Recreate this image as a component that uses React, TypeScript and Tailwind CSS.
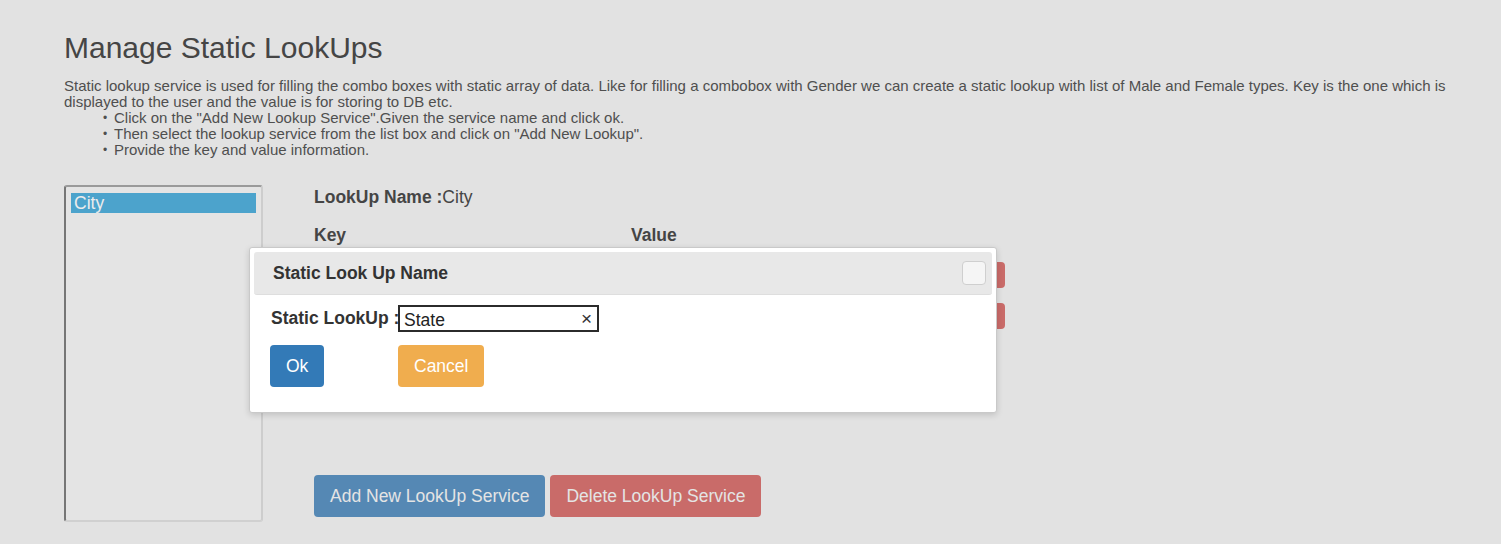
import React from 'react'

const rows = [
  { key: 'Hyderabad', value: 'HYD' },
  { key: 'Chennai', value: 'CHN' },
]

const steps = [
  'Click on the "Add New Lookup Service".Given the service name and click ok.',
  'Then select the lookup service from the list box and click on "Add New Lookup".',
  'Provide the key and value information.',
]

function StaticLookupModal() {
  const [name, setName] = React.useState('State')

  return (
    <div className="absolute left-[249px] top-[247px] w-[748px] bg-white border border-[#c9c9c9] rounded-[3px] p-[4px] pb-[25px] shadow-[0_2px_6px_rgba(0,0,0,0.15)]">
      <div className="h-[43px] bg-[#e8e8e8] rounded-[3px] border-b border-[#dedede] flex items-center justify-between pl-[19px] pr-[6px]">
        <span className="text-[17.5px] font-bold text-[#333]">Static Look Up Name</span>
        <button className="w-[24px] h-[24px] bg-[#f5f5f5] border border-[#cfcfcf] rounded-[4px]" />
      </div>

      <div className="pl-[16px] pt-[10px]">
        <div className="grid grid-cols-[128px_auto] items-center">
          <label className="text-[17.5px] font-bold text-[#333] pl-[1px] whitespace-nowrap">Static LookUp :</label>
          <div className="relative w-[201px] h-[27px] border-2 border-[#2b2b2b] flex items-center">
            <input
              value={name}
              onChange={(e) => setName(e.target.value)}
              className="w-full h-full pl-[4px] pr-[20px] pt-[3px] text-[17.5px] text-[#222] outline-none bg-white"
            />
            <span className="absolute right-[5px] top-[2px] text-[19px] leading-[20px] text-[#333]">×</span>
          </div>
        </div>

        <div className="grid grid-cols-[128px_auto] mt-[13px]">
          <div>
            <button className="h-[42px] px-[16px] bg-[#337ab7] text-white text-[17.5px] rounded-[4px]">Ok</button>
          </div>
          <div>
            <button className="h-[42px] px-[16px] bg-[#f0ad4e] text-white text-[17.5px] rounded-[4px]">Cancel</button>
          </div>
        </div>
      </div>
    </div>
  )
}

export default function App() {
  return (
    <div
      className="relative min-h-[544px] bg-[#e2e2e2] pl-[64px] pt-[31px] text-[#4a4a4a]"
      style={{ fontFamily: '"Liberation Sans", Arial, sans-serif' }}
    >
      <h2 className="text-[30px] leading-[33px] text-[#454545]">Manage Static LookUps</h2>

      <div className="mt-[14px] w-[1400px] text-[15px] leading-[16px] text-[#4f4f4f]">
        <p>
          Static lookup service is used for filling the combo boxes with static array of data. Like for filling a
          combobox with Gender we can create a static lookup with list of Male and Female types. Key is the one which is
          displayed to the user and the value is for storing to DB etc.
        </p>
        <ul className="pl-[50px]">
          {steps.map((s) => (
            <li key={s} className="flex">
              <span className="w-[11px] -ml-[11px] text-[12px] leading-[16px]">•</span>
              <span>{s}</span>
            </li>
          ))}
        </ul>
      </div>

      <div className="mt-[27px] flex">
        <div className="w-[199px] h-[337px] rounded-[3px] border-2 border-t-[#9a9a9a] border-l-[#767676] border-r-[#cdcdcd] border-b-[#d0d0d0] bg-[#e4e4e4] pt-[6px] px-[5px]">
          <div className="h-[20px] bg-[#4ca3cc] text-[#ececec] text-[17.5px] leading-[20px] pl-[3px]">City</div>
        </div>

        <div className="ml-[51px] flex flex-col">
          <div className="mt-[2px] text-[17.5px] leading-[20px] text-[#454545]">
            <span className="font-bold">LookUp Name :</span>City
          </div>

          <div className="mt-[18px] grid grid-cols-[317px_auto] text-[17.5px] leading-[20px] font-bold text-[#454545]">
            <span>Key</span>
            <span>Value</span>
          </div>

          <div className="mt-[17px] flex flex-col gap-[15px]">
            {rows.map((r) => (
              <div key={r.key} className="flex items-center">
                <input
                  defaultValue={r.key}
                  className="w-[300px] h-[26px] mr-[17px] border border-[#bbb] bg-[#e8e8e8] px-2 text-[15px]"
                />
                <input
                  defaultValue={r.value}
                  className="w-[300px] h-[26px] border border-[#bbb] bg-[#e8e8e8] px-2 text-[15px]"
                />
                <button className="ml-[14px] w-[60px] h-[26px] bg-[#c96b69] text-[#e2e2e2] text-[14px] rounded-[4px]">
                  Delete
                </button>
              </div>
            ))}
          </div>

          <div className="mt-[146px] flex gap-[5px]">
            <button className="h-[42px] px-[16px] bg-[#5588b4] text-[#e4e4e4] text-[17.5px] rounded-[4px]">
              Add New LookUp Service
            </button>
            <button className="h-[42px] px-[16px] bg-[#c96b69] text-[#e4e4e4] text-[17.5px] rounded-[4px]">
              Delete LookUp Service
            </button>
          </div>
        </div>
      </div>

      <StaticLookupModal />
    </div>
  )
}
